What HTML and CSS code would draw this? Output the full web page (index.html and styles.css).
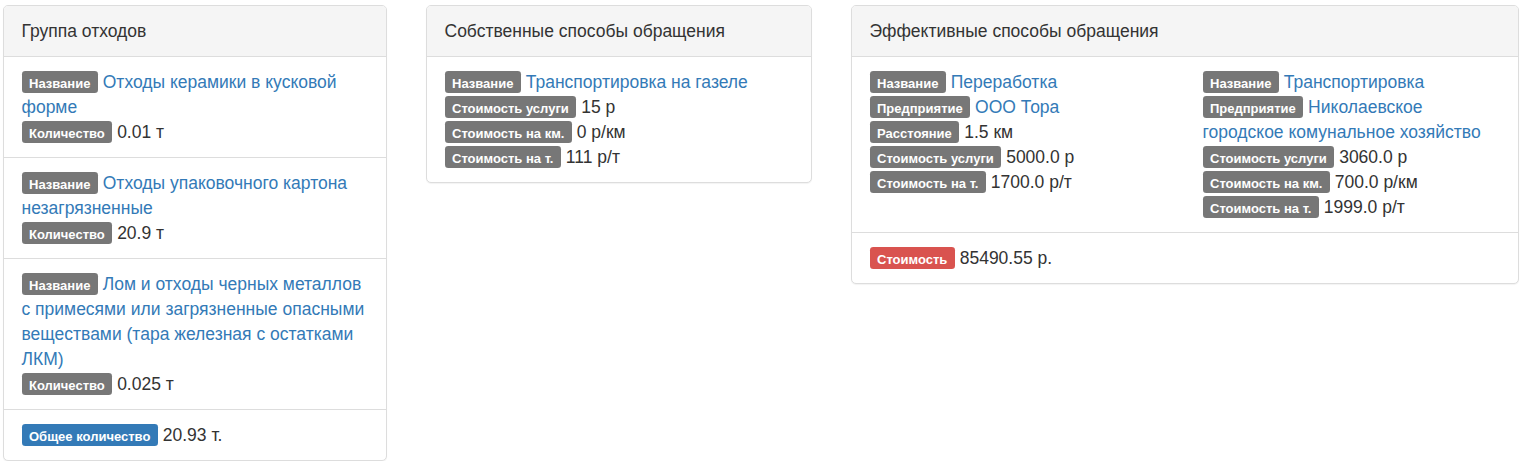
FILE: index.html
```html
<!DOCTYPE html>
<html lang="ru">
<head>
<meta charset="utf-8">
<title>Отходы</title>
<link rel="stylesheet" href="styles.css">
</head>
<body>
<div class="page">
  <div class="panel p1">
    <div class="panel-heading">Группа отходов</div>
    <ul class="list-group">
      <li class="list-group-item">
        <div><span class="label">Название</span> <a href="#">Отходы керамики в кусковой форме</a></div>
        <div><span class="label">Количество</span> 0.01 т</div>
      </li>
      <li class="list-group-item">
        <div><span class="label">Название</span> <a href="#">Отходы упаковочного картона незагрязненные</a></div>
        <div><span class="label">Количество</span> 20.9 т</div>
      </li>
      <li class="list-group-item">
        <div><span class="label">Название</span> <a href="#">Лом и отходы черных металлов с примесями или загрязненные опасными веществами (тара железная с остатками ЛКМ)</a></div>
        <div><span class="label">Количество</span> 0.025 т</div>
      </li>
      <li class="list-group-item">
        <div><span class="label label-primary">Общее количество</span> 20.93 т.</div>
      </li>
    </ul>
  </div>
  <div class="panel p2">
    <div class="panel-heading">Собственные способы обращения</div>
    <ul class="list-group">
      <li class="list-group-item">
        <div><span class="label">Название</span> <a href="#">Транспортировка на газеле</a></div>
        <div><span class="label">Стоимость услуги</span> 15 р</div>
        <div><span class="label">Стоимость на км.</span> 0 р/км</div>
        <div><span class="label">Стоимость на т.</span> 111 р/т</div>
      </li>
    </ul>
  </div>
  <div class="panel p3">
    <div class="panel-heading">Эффективные способы обращения</div>
    <ul class="list-group">
      <li class="list-group-item">
        <div class="row">
          <div class="col">
            <div><span class="label">Название</span> <a href="#">Переработка</a></div>
            <div><span class="label">Предприятие</span> <a href="#">ООО Тора</a></div>
            <div><span class="label">Расстояние</span> 1.5 км</div>
            <div><span class="label">Стоимость услуги</span> 5000.0 р</div>
            <div><span class="label">Стоимость на т.</span> 1700.0 р/т</div>
          </div>
          <div class="col">
            <div><span class="label">Название</span> <a href="#">Транспортировка</a></div>
            <div><span class="label">Предприятие</span> <a href="#">Николаевское городское комунальное хозяйство</a></div>
            <div><span class="label">Стоимость услуги</span> 3060.0 р</div>
            <div><span class="label">Стоимость на км.</span> 700.0 р/км</div>
            <div><span class="label">Стоимость на т.</span> 1999.0 р/т</div>
          </div>
        </div>
      </li>
      <li class="list-group-item">
        <div><span class="label label-danger">Стоимость</span> 85490.55 р.</div>
      </li>
    </ul>
  </div>
</div>
</body>
</html>
```

FILE: styles.css
```css
* { box-sizing: border-box; }
html, body {
  margin: 0;
  padding: 0;
  background: #fff;
}
body {
  font-family: "Liberation Sans", Arial, Helvetica, sans-serif;
  font-size: 17.5px;
  line-height: 25px;
  color: #333;
}
.page {
  display: flex;
  align-items: flex-start;
  gap: 39px;
  padding: 5px 0 0 3px;
}
.panel {
  background: #fff;
  border: 1px solid #ddd;
  border-radius: 5px;
  box-shadow: 0 1px 1px rgba(0, 0, 0, 0.05);
  overflow: hidden;
}
.p1 { width: 384px; }
.p2 { width: 386px; }
.p3 { width: 668px; }
.panel-heading {
  background: #f5f5f5;
  border-bottom: 1px solid #ddd;
  padding: 12.5px 17.5px;
  color: #333;
}
.list-group {
  list-style: none;
  margin: 0;
  padding: 0;
}
.list-group-item {
  padding: 12.5px 17.5px;
  border-top: 1px solid #ddd;
}
.list-group-item:first-child {
  border-top: 0;
}
a {
  color: #337ab7;
  text-decoration: none;
}
.label {
  display: inline-block;
  font-size: 13px;
  font-weight: bold;
  line-height: 1;
  color: #fff;
  background: #777;
  padding: 5.5px 7.5px 3.5px;
  border-radius: 3.3px;
  white-space: nowrap;
  vertical-align: baseline;
}
.label-primary { background: #337ab7; }
.label-danger { background: #d9534f; }
.row {
  display: flex;
}
.col {
  flex: 0 0 50%;
}
.col:first-child {
  padding-right: 17.5px;
}
.col + .col {
  padding-left: 17.5px;
}
```
